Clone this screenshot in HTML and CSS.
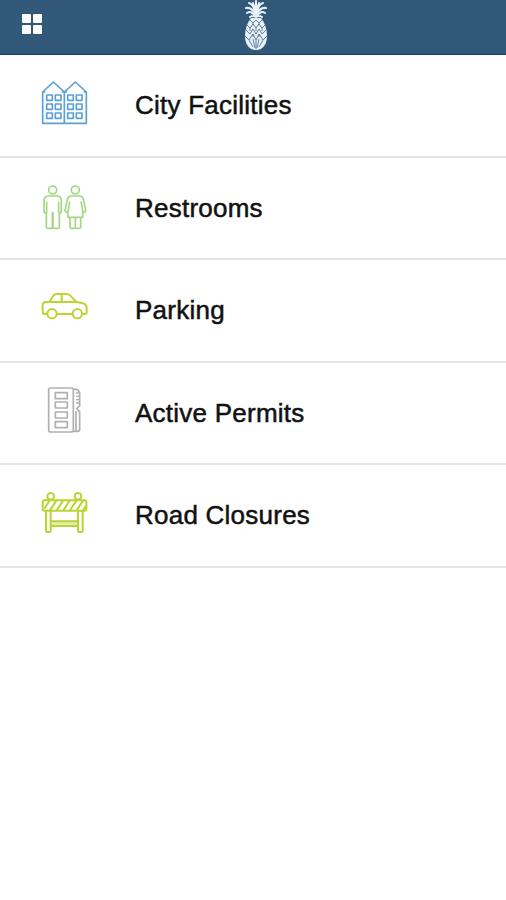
FILE: index.html
```html
<!DOCTYPE html>
<html lang="en">
<head>
    <meta charset="UTF-8">
    <title>City Map</title>
    <link rel="stylesheet" href="styles.css">
</head>
<body>
    <header class="topbar">
        <button class="menu-btn" aria-label="Menu">
            <span></span><span></span><span></span><span></span>
        </button>
        <svg class="logo" viewBox="0 0 28 52">
            <!-- crown -->
            <g fill="none" stroke="#e9f1f7" stroke-width="2" stroke-linecap="round">
                <path d="M14 1v15M11 3l2 6M17 3l-2 6M7 3q4 1 6 8M21 3q-4 1-6 8M4 8q6-1 9 6M24 8q-6-1-9 6M5 13q4-3 8 3M23 13q-4-3-8 3M8 17q3-2 6 0 3-2 6 0"/>
            </g>
            <!-- fruit -->
            <path fill="#e9f1f7" d="M9 18h10c4 5 6 11 6 18 0 8-4 14-11 14S3 44 3 36c0-7 2-13 6-18z"/>
            <g fill="none" stroke="#4d7595" stroke-width=".9">
                <path d="M8 20l3 3 3-3 3 3 3-3M5 25l3 3 3-4 3 4 3-4 3 4 3-3M4 30l4 4 3-5 3 5 3-5 3 5 4-4M3 36l4 4 4-6 3 6 3-6 4 6 4-4"/>
                <path d="M7 40l4 7M11 39l2 9M14 40v9M17 39l-2 9M21 40l-4 7M11 23v2M17 23v2M8 28v3M14 28v3M20 28v3M11 34v3M17 34v3"/>
            </g>
        </svg>
    </header>
    <ul class="menu-list">
        <li class="menu-item">
            <svg class="icon blue" viewBox="0 4 180 180">
                <path d="M26 149V55L58 25 91 55V149zM91 55L124 25 157 55V149H91M26 55H34M83 55H99M149 55H157"/>
                <path d="M38 64h17v16H38zM64 64h17v16H64zM38 91h17v16H38zM64 91h17v16H64zM38 118h17v16H38zM64 118h17v16H64zM101 64h17v16h-17zM127 64h17v16h-17zM101 91h17v16h-17zM127 91h17v16h-17zM101 118h17v16h-17zM127 118h17v16h-17z"/>
            </svg>
            <span class="label">City Facilities</span>
        </li>
        <li class="menu-item">
            <svg class="icon green" viewBox="0 0 180 180">
                <circle cx="56" cy="36" r="12"/>
                <path d="M41 54h30q11 2 11 13v31q0 8-6 7V148q0 3-3 3H60q-3 0-3-3V104h-2v44q0 3-3 3H40q-3 0-3-3V105q-7 0-7-7V67q0-11 11-13zM38 71v33M74 71v33"/>
                <circle cx="124" cy="36" r="12"/>
                <path d="M110 54h28q8 1 10 10l7 32q1 7-6 7l-3-1v16H102v-16q-8 2-9-4l7-33q2-10 10-11zM107 70l-5 33M141 70l6 33M108 119v29q0 3 3 3h10q3 0 3-3V119M124 148q0 3 3 3h10q3 0 3-3V119"/>
            </svg>
            <span class="label">Restrooms</span>
        </li>
        <li class="menu-item">
            <svg class="icon lime" viewBox="0 1 180 180">
                <path d="M39 103H32q-6 0-6-7V76q0-9 10-9h10l11-18q4-6 11-6h29q7 0 12 5l18 19 21 4q10 3 10 13v14q0 5-6 5h-7M69 103h46M46 67h80M83 43v24"/>
                <circle cx="54" cy="102" r="14"/>
                <circle cx="130" cy="102" r="14"/>
            </svg>
            <span class="label">Parking</span>
        </li>
        <li class="menu-item">
            <svg class="icon gray" viewBox="0 8 180 180">
                <rect x="44" y="23" width="74" height="132" rx="5"/>
                <path d="M64 37h36v18H64zM64 65h36v18H64zM64 95h36v18H64zM64 124h36v18H64z"/>
                <path d="M118 27h11l8 9v41l-9 8 9 9v53q0 6-6 6h-13M126 92v61"/>
                <path d="M126 38h10M126 48h10M126 58h10M126 68h10" stroke-width="4"/>
            </svg>
            <span class="label">Active Permits</span>
        </li>
        <li class="menu-item">
            <svg class="icon lime" viewBox="0 4 180 180">
                <rect x="26" y="50" width="131" height="31" rx="5"/>
                <path d="M31 75L46 52M48 80L67 51M68 80L87 51M88 80L107 51M108 80L127 51M128 80L147 51M147 80L156 66"/>
                <circle cx="50" cy="38" r="10"/>
                <circle cx="132" cy="38" r="10"/>
                <path d="M36 81v60q0 4 4 4h6q4 0 4-4V81M132 81v60q0 4 4 4h6q4 0 4-4V81M50 113h82M50 127h82"/>
                <path d="M51 120h80" stroke-width="12" opacity=".4"/>
            </svg>
            <span class="label">Road Closures</span>
        </li>
    </ul>
</body>
</html>
```

FILE: styles.css
```css
* {
    box-sizing: border-box;
}
body {
    margin: 0;
    background: #fff;
    color: #111;
    font-family: "Liberation Sans", Arial, sans-serif;
}
.topbar {
    display: grid;
    grid-template-columns: 1fr 28px 1fr;
    height: 55px;
    padding: 0 22px;
    background: #315879;
    border-bottom: 1px solid #18446a;
}
.menu-btn {
    display: grid;
    grid-template-columns: 9px 9px;
    grid-template-rows: 9px 9px;
    gap: 2px;
    align-self: start;
    justify-self: start;
    margin: 14px 0 0;
    padding: 0;
    border: none;
    background: none;
}
.menu-btn span {
    background: #fff;
    border-radius: 1px;
}
.logo {
    width: 28px;
    height: 52px;
    margin-left: 3px;
}
.menu-list {
    margin: 0;
    padding: 0;
    list-style: none;
}
.menu-item {
    display: flex;
    align-items: center;
    gap: 41px;
    height: 102.5px;
    padding-left: 34px;
    border-bottom: 2px solid #e6e6e6;
}
.icon {
    width: 60px;
    height: 60px;
    fill: none;
    stroke-width: 5;
    stroke-linejoin: round;
}
.blue {
    stroke: #5b9fd6;
}
.green {
    stroke: #a5d683;
}
.lime {
    stroke: #b9d532;
    stroke-width: 6;
}
.gray {
    stroke: #b0b0b0;
}
.label {
    font-size: 26px;
    line-height: 30px;
    letter-spacing: 0.24px;
    -webkit-text-stroke: 0.5px #111;
}
```
